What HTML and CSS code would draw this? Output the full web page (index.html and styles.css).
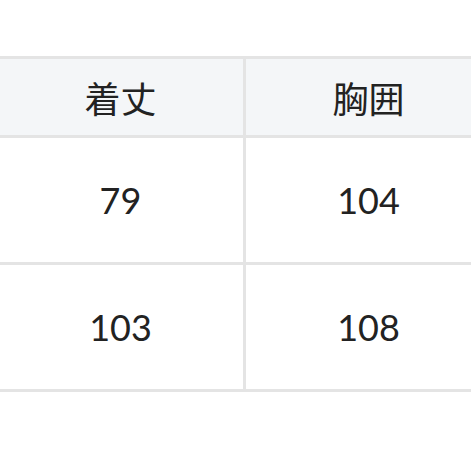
FILE: index.html
```html
<!DOCTYPE html>
<html lang="ja">
<head>
<meta charset="utf-8">
<link rel="stylesheet" href="styles.css">
</head>
<body>
<div class="wrap">
<table class="size-table">
<thead>
<tr><th>着丈</th><th>胸囲</th></tr>
</thead>
<tbody>
<tr><td>79</td><td>104</td></tr>
<tr><td>103</td><td>108</td></tr>
</tbody>
</table>
</div>
</body>
</html>
```

FILE: styles.css
```css
html, body {
  margin: 0;
  padding: 0;
  background: #ffffff;
  overflow: hidden;
}
.wrap {
  padding-top: 56px;
  margin-left: -5px;
}
.size-table {
  border-collapse: collapse;
  table-layout: fixed;
  width: 499px;
  font-family: Lato, "Noto Sans CJK JP", sans-serif;
  font-size: 36px;
  color: #222222;
}
.size-table th,
.size-table td {
  border: 3px solid #e4e4e4;
  text-align: center;
  vertical-align: middle;
  padding: 0;
}
.size-table th {
  height: 76px;
  background: #f4f6f8;
  font-weight: 400;
  font-family: "Noto Sans CJK JP", sans-serif;
}
.size-table td {
  height: 124px;
}
```
